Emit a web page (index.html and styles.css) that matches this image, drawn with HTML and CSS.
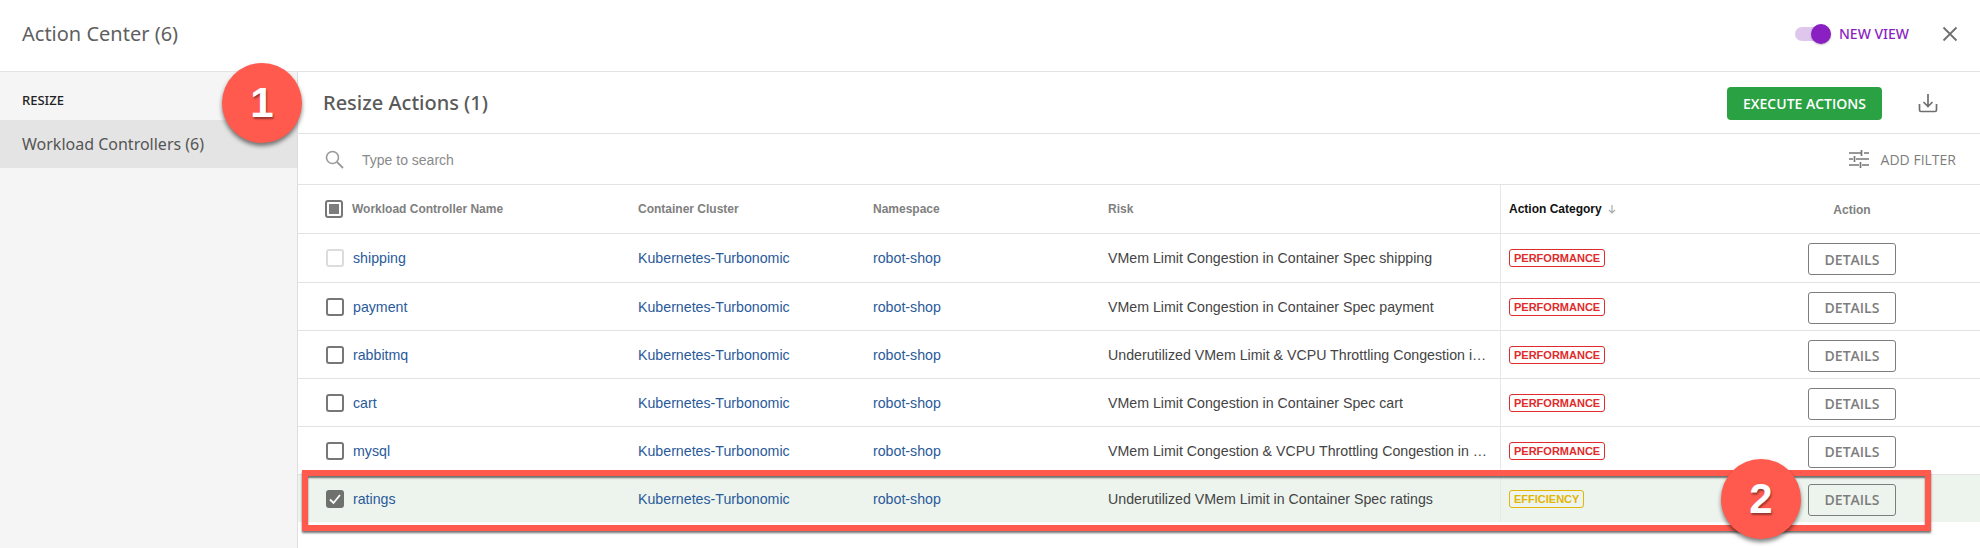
FILE: index.html
```html
<!DOCTYPE html>
<html lang="en">
<head>
    <meta charset="UTF-8">
    <title>Action Center</title>
    <link rel="stylesheet" href="styles.css">
</head>
<body>

    <header class="top-bar">
        <h1 class="page-title">Action Center (6)</h1>
        <div class="view-toggle">
            <span class="toggle"><span class="toggle-thumb"></span></span>
            <span class="toggle-label">NEW VIEW</span>
        </div>
        <svg class="close-icon" width="16" height="16" viewBox="0 0 16 16"><path d="M1.5 1.5l13 13M14.5 1.5l-13 13" fill="none" stroke="#6f6f6f" stroke-width="1.8"/></svg>
    </header>

    <div class="content">
        <aside class="sidebar">
            <div class="side-label">RESIZE</div>
            <div class="side-item">Workload Controllers (6)</div>
        </aside>

        <main class="main">
            <div class="title-bar">
                <h2 class="section-title">Resize Actions (1)</h2>
                <button class="execute-btn">EXECUTE ACTIONS</button>
                <svg class="download-icon" width="20" height="20" viewBox="0 0 20 20"><path d="M1.5 11v6a1.5 1.5 0 0 0 1.5 1.5h14a1.5 1.5 0 0 0 1.5-1.5v-6M10 1v12M5.5 9l4.500 4.500 4.500-4.500" fill="none" stroke="#6f6f6f" stroke-width="1.700"/></svg>
            </div>

            <div class="search-bar">
                <svg class="search-icon" width="19" height="19" viewBox="0 0 19 19"><circle cx="7.500" cy="7.500" r="6" fill="none" stroke="#9a9a9a" stroke-width="1.600"/><path d="M12 12l6 6" stroke="#9a9a9a" stroke-width="1.800"/></svg>
                <span class="search-text">Type to search</span>
                <svg class="filter-icon" width="20" height="20" viewBox="0 0 20 20"><path d="M0 4h12M15 4h5M0 10h4M7 10h13M0 16h10M13 16h7M12.500 1v6M5.500 7v6M11.500 13v6" fill="none" stroke="#777" stroke-width="1.700"/></svg>
                <span class="filter-text">ADD FILTER</span>
            </div>

            <div class="row head-row">
                <div class="name-cell"><span class="check check-some"></span>Workload Controller Name</div>
                <div>Container Cluster</div>
                <div>Namespace</div>
                <div>Risk</div>
                <div class="cat-cell sorted">Action Category <svg width="10" height="10" viewBox="0 0 10 10"><path d="M5 1v8M2 6l3 3 3-3" fill="none" stroke="#aaa" stroke-width="1.200"/></svg></div>
                <div class="action-cell">Action</div>
            </div>

            <div class="row first-row">
                <div class="name-cell"><span class="check check-off"></span><a>shipping</a></div>
                <div><a>Kubernetes-Turbonomic</a></div>
                <div><a>robot-shop</a></div>
                <div class="risk">VMem Limit Congestion in Container Spec shipping</div>
                <div class="cat-cell"><span class="tag tag-perf">PERFORMANCE</span></div>
                <div class="action-cell"><button class="details-btn">DETAILS</button></div>
            </div>
            <div class="row">
                <div class="name-cell"><span class="check"></span><a>payment</a></div>
                <div><a>Kubernetes-Turbonomic</a></div>
                <div><a>robot-shop</a></div>
                <div class="risk">VMem Limit Congestion in Container Spec payment</div>
                <div class="cat-cell"><span class="tag tag-perf">PERFORMANCE</span></div>
                <div class="action-cell"><button class="details-btn">DETAILS</button></div>
            </div>
            <div class="row">
                <div class="name-cell"><span class="check"></span><a>rabbitmq</a></div>
                <div><a>Kubernetes-Turbonomic</a></div>
                <div><a>robot-shop</a></div>
                <div class="risk">Underutilized VMem Limit &amp; VCPU Throttling Congestion i…</div>
                <div class="cat-cell"><span class="tag tag-perf">PERFORMANCE</span></div>
                <div class="action-cell"><button class="details-btn">DETAILS</button></div>
            </div>
            <div class="row">
                <div class="name-cell"><span class="check"></span><a>cart</a></div>
                <div><a>Kubernetes-Turbonomic</a></div>
                <div><a>robot-shop</a></div>
                <div class="risk">VMem Limit Congestion in Container Spec cart</div>
                <div class="cat-cell"><span class="tag tag-perf">PERFORMANCE</span></div>
                <div class="action-cell"><button class="details-btn">DETAILS</button></div>
            </div>
            <div class="row">
                <div class="name-cell"><span class="check"></span><a>mysql</a></div>
                <div><a>Kubernetes-Turbonomic</a></div>
                <div><a>robot-shop</a></div>
                <div class="risk">VMem Limit Congestion &amp; VCPU Throttling Congestion in …</div>
                <div class="cat-cell"><span class="tag tag-perf">PERFORMANCE</span></div>
                <div class="action-cell"><button class="details-btn">DETAILS</button></div>
            </div>
            <div class="row selected-row">
                <div class="name-cell"><span class="check check-on"><svg width="14" height="14" viewBox="0 0 14 14"><path d="M2 7.500l3.500 3.500 6.500-8" fill="none" stroke="#fff" stroke-width="1.800"/></svg></span><a>ratings</a></div>
                <div><a>Kubernetes-Turbonomic</a></div>
                <div><a>robot-shop</a></div>
                <div class="risk">Underutilized VMem Limit in Container Spec ratings</div>
                <div class="cat-cell"><span class="tag tag-eff">EFFICIENCY</span></div>
                <div class="action-cell"><button class="details-btn">DETAILS</button></div>
            </div>
        </main>
    </div>

    <!-- callouts drawn over the page -->
    <div class="callout-box"></div>
    <div class="callout callout-one">1</div>
    <div class="callout callout-two">2</div>

</body>
</html>
```

FILE: styles.css
```css
* {
    box-sizing: border-box;
}
body {
    margin: 0;
    height: 548px;
    overflow: hidden;
    position: relative;
    background-color: white;
    font-family: "Liberation Sans", Arial, sans-serif;
}
h1, h2 {
    margin: 0;
    font-weight: normal;
}
button {
    font-family: "Open Sans", sans-serif;
    cursor: pointer;
}

.top-bar {
    height: 72px;
    display: flex;
    align-items: center;
    padding: 0 22px 4px 22px;
    border-bottom: 1px solid #e3e3e3;
}
.page-title {
    flex: 1;
    font-family: "Noto Sans", sans-serif;
    font-size: 20px;
    color: #5f5f5f;
}
.view-toggle {
    display: flex;
    align-items: center;
    gap: 8px;
    margin-right: 33px;
}
.toggle {
    position: relative;
    width: 36px;
    height: 14px;
    border-radius: 7px;
    background-color: #dfc6ec;
}
.toggle-thumb {
    position: absolute;
    right: 0;
    top: -3px;
    width: 20px;
    height: 20px;
    border-radius: 50%;
    background-color: #8a1fc2;
    box-shadow: 0 1px 2px rgba(0, 0, 0, 0.25);
}
.toggle-label {
    font-family: "Noto Sans", sans-serif;
    font-size: 14px;
    font-weight: 500;
    color: #8a1fc2;
}

.content {
    display: flex;
    height: 476px;
}
.sidebar {
    width: 298px;
    background-color: #f5f5f5;
    border-right: 1px solid #dedede;
}
.side-label {
    height: 48px;
    padding: 20px 0 0 22px;
    font-family: "Noto Sans", sans-serif;
    font-size: 13px;
    line-height: 16px;
    font-weight: 500;
    color: #222;
}
.side-item {
    height: 48px;
    line-height: 48px;
    padding-left: 22px;
    font-family: "Noto Sans", sans-serif;
    font-size: 16px;
    color: #555;
    background-color: #e4e4e4;
}

.main {
    flex: 1;
    min-width: 0;
}
.title-bar {
    height: 62px;
    display: flex;
    align-items: center;
    padding: 0 42px 0 25px;
    border-bottom: 1px solid #e3e3e3;
}
.section-title {
    flex: 1;
    font-family: "Noto Sans", sans-serif;
    font-size: 20px;
    font-weight: 500;
    color: #5a5a5a;
}
.execute-btn {
    width: 155px;
    height: 33px;
    margin: 2px 36px 0 0;
    border: none;
    border-radius: 4px;
    background-color: #2aa243;
    color: white;
    font-size: 14px;
    font-weight: 600;
}
.search-bar {
    height: 51px;
    display: flex;
    align-items: center;
    padding: 0 24px 0 27px;
    border-bottom: 1px solid #e3e3e3;
}
.search-text {
    flex: 1;
    margin: 2px 0 0 18px;
    font-size: 14px;
    color: #8a8a8a;
}
.filter-text {
    margin-left: 12px;
    font-family: "Open Sans", sans-serif;
    font-size: 14px;
    font-weight: 500;
    color: #7d7d7d;
}

.row {
    height: 48px;
    display: grid;
    grid-template-columns: 313px 235px 235px 392px 300px 104px;
    align-items: center;
    padding-left: 27px;
    border-bottom: 1px solid #e3e3e3;
    font-size: 14.200px;
    color: #444;
}
.head-row {
    height: 49px;
    font-size: 12px;
    font-weight: bold;
    color: #808080;
}
.first-row {
    height: 49px;
}
.selected-row {
    height: 47px;
    border-bottom: none;
    background-color: #edf4ee;
}
.row a {
    color: #2a5a9a;
}
.name-cell {
    display: flex;
    align-items: center;
    gap: 9px;
}
.row:not(.head-row) .check {
    margin-left: 1px;
}
.risk {
    white-space: nowrap;
}
.cat-cell {
    align-self: stretch;
    display: flex;
    align-items: center;
    gap: 5px;
    padding-left: 8px;
    border-left: 1px solid #e8e8e8;
}
.sorted {
    color: #111;
}
.action-cell {
    display: flex;
    justify-content: center;
    margin-top: 2px;
}

.check {
    width: 18px;
    height: 18px;
    flex: none;
    display: flex;
    align-items: center;
    justify-content: center;
    border: 2px solid #777;
    border-radius: 3px;
    background-color: white;
}
.check-off {
    border-color: #dcdcdc;
}
.check-some::after {
    content: "";
    width: 10px;
    height: 10px;
    background-color: #7d7d7d;
}
.check-on {
    border: none;
    background-color: #6f716e;
}
.tag {
    padding: 0 4px;
    height: 18px;
    line-height: 16px;
    border: 1px solid;
    border-radius: 3px;
    font-size: 11px;
    font-weight: bold;
}
.tag-perf {
    border-color: #df2b2b;
    color: #df2b2b;
}
.tag-eff {
    border-color: #e3b505;
    color: #e3b505;
}
.details-btn {
    width: 88px;
    height: 32px;
    border: 1px solid #7d7d7d;
    border-radius: 3px;
    background-color: transparent;
    color: #7d7d7d;
    font-size: 14px;
    font-weight: 600;
}

.callout-box {
    position: absolute;
    left: 302px;
    top: 470px;
    width: 1629px;
    height: 61px;
    border: 6px solid #ff5a4d;
    box-shadow: 0 2px 2px rgba(0, 0, 0, 0.55), inset 0 2px 2px rgba(0, 0, 0, 0.55);
}
.callout {
    position: absolute;
    width: 80px;
    height: 80px;
    border-radius: 50%;
    display: flex;
    align-items: center;
    justify-content: center;
    background-color: #ff5a4d;
    box-shadow: 0 3px 4px rgba(0, 0, 0, 0.5);
    color: white;
    font-size: 42px;
    font-weight: bold;
    text-shadow: 1px 2px 2px rgba(0, 0, 0, 0.4);
}
.callout-one {
    left: 222px;
    top: 63px;
}
.callout-two {
    left: 1721px;
    top: 459px;
}
```
